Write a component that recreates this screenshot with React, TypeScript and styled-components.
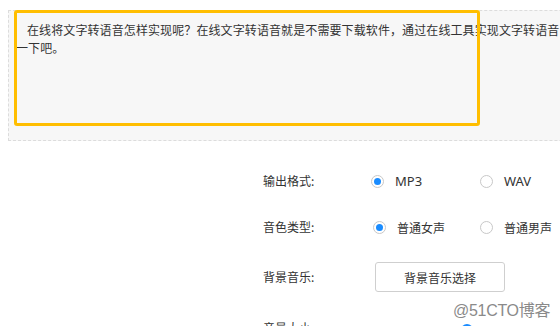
import styled, { createGlobalStyle } from "styled-components";

const GlobalStyle = createGlobalStyle`
    html, body {
        margin: 0;
        padding: 0;
        background: #fff;
        overflow: hidden;
    }
    body {
        font-family: "Noto Sans CJK SC", "Noto Sans", sans-serif;
        color: #333;
    }
`

const Page = styled.div`
    position: relative;
    width: 560px;
    height: 326px;
    overflow: hidden;
    padding: 10px 0 0 8px;
    box-sizing: border-box;
`

const TextPanel = styled.div`
    width: 760px;
    height: 131px;
    box-sizing: border-box;
    border: 1px dashed #dcdcdc;
    background: #f7f7f7;
    padding: 10px 0 0 7px;
`

const TextLine = styled.div<{ $indent?: number }>`
    font-size: 12px;
    line-height: 18px;
    letter-spacing: 0.1px;
    white-space: nowrap;
    color: #333;
    text-indent: ${p => p.$indent || 0}px;
`

const Highlight = styled.div`
    position: absolute;
    left: 14px;
    top: 10px;
    width: 466px;
    height: 116px;
    box-sizing: border-box;
    border: 3px solid #ffbe00;
    border-radius: 3px;
    pointer-events: none;
`

const Form = styled.div`
    margin: 25px 0 0 255px;
    display: flex;
    flex-direction: column;
`

const Row = styled.div<{ $h: number }>`
    display: flex;
    align-items: flex-start;
    height: ${p => p.$h}px;
`

const Label = styled.div`
    width: 112px;
    height: 30px;
    line-height: 30px;
    font-size: 12px;
    color: #333;
`

const Options = styled.div`
    display: flex;
    height: 30px;
    align-items: center;
`

const Option = styled.label<{ $w: number }>`
    display: flex;
    align-items: center;
    gap: 11px;
    width: ${p => p.$w}px;
    font-size: 12px;
    color: #333;
`

const OptionText = styled.span<{ $latin?: boolean }>`
    font-family: ${p => p.$latin ? '"Noto Sans", sans-serif' : '"Noto Sans CJK SC", sans-serif'};
    font-size: ${p => p.$latin ? 13 : 12}px;
`

const Radio = styled.span<{ $on?: boolean }>`
    width: 13px;
    height: 13px;
    box-sizing: border-box;
    border: 1px solid #c8c8c8;
    border-radius: 50%;
    background: #fff;
    display: flex;
    align-items: center;
    justify-content: center;
    &::after {
        content: "";
        width: 7px;
        height: 7px;
        border-radius: 50%;
        background: ${p => p.$on ? "#1a8cff" : "transparent"};
    }
`

const Button = styled.button`
    width: 130px;
    height: 30px;
    border: 1px solid #cfcfcf;
    border-radius: 3px;
    background: #fff;
    font-family: "Noto Sans CJK SC", sans-serif;
    font-size: 12px;
    color: #333;
    padding: 0;
`

const Slider = styled.div`
    position: relative;
    width: 170px;
    height: 4px;
    margin-top: 13px;
    background: #e4e4e4;
    border-radius: 2px;
`

const Thumb = styled.span`
    position: absolute;
    left: 86px;
    top: -2px;
    width: 12px;
    height: 12px;
    border-radius: 50%;
    background: #1a8cff;
`

const Watermark = styled.div`
    position: absolute;
    left: 453px;
    top: 297px;
    font-family: "Liberation Sans", "Noto Sans CJK SC", sans-serif;
    font-size: 16px;
    color: #8a8a8a;
    text-shadow: 0 0 2px #fff, 0 0 2px #fff;
    letter-spacing: -0.3px;
`

export default function App() {
    return (
        <>
            <GlobalStyle />
            <Page>
                <TextPanel>
                    <TextLine $indent={11}>在线将文字转语音怎样实现呢？在线文字转语音就是不需要下载软件，通过在线工具实现文字转语音，我们一起来了解</TextLine>
                    <TextLine>一下吧。</TextLine>
                </TextPanel>
                <Highlight />
                <Form>
                    <Row $h={46}>
                        <Label>输出格式:</Label>
                        <Options>
                            <Option $w={109}><Radio $on /><OptionText $latin>MP3</OptionText></Option>
                            <Option $w={80}><Radio /><OptionText $latin>WAV</OptionText></Option>
                        </Options>
                    </Row>
                    <Row $h={50}>
                        <Label>音色类型:</Label>
                        <Options>
                            <Option $w={107}><Radio $on /><OptionText>普通女声</OptionText></Option>
                            <Option $w={80}><Radio /><OptionText>普通男声</OptionText></Option>
                        </Options>
                    </Row>
                    <Row $h={51}>
                        <Label>背景音乐:</Label>
                        <Button>背景音乐选择</Button>
                    </Row>
                    <Row $h={30}>
                        <Label>音量大小:</Label>
                        <Slider><Thumb /></Slider>
                    </Row>
                </Form>
                <Watermark>@51CTO博客</Watermark>
            </Page>
        </>
    )
}
